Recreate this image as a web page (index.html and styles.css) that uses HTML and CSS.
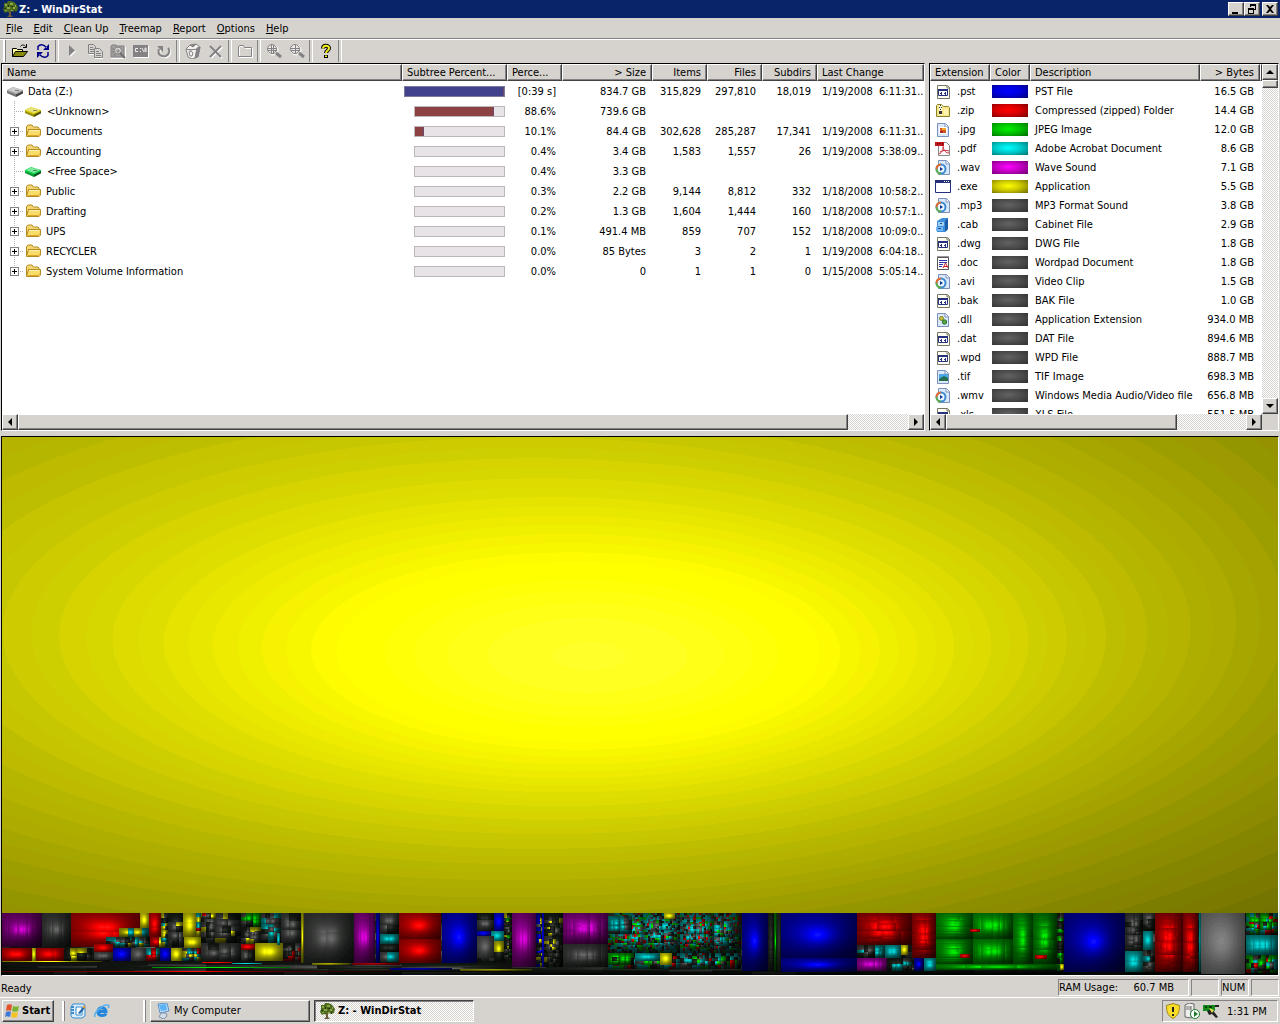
FILE: index.html
```html
<!DOCTYPE html>
<html lang="en">
<head>
<meta charset="utf-8">
<title>Z: - WinDirStat</title>
<link rel="stylesheet" href="styles.css">
</head>
<body>
<svg class="defs" aria-hidden="true">
  <symbol id="tree" viewBox="0 0 16 16"><path d="M2 2h3l1-2h3l3 1 2 2 2 3-1 4-3 1-2-1-2 2-3-1-2 1-2-3 1-3z" fill="#4d6b1e"/><path d="M3 3h2v2H3zM8 2h3v2H8zM5 6h3v2H5zM11 6h2v2h-2zM3 9h2v1H3zM9 9h2v1H9zM13 4h1v2h-1z" fill="#8fa648"/><path d="M6 4h1v2H6zM9 5h2v1H9zM2 7h2v1H2zM12 9h1v2h-1z" fill="#22380c"/><path d="M7 10h2v4l2 2H5l2-2z" fill="#6d5a3a"/></symbol>
  <symbol id="folder" viewBox="0 0 16 16"><path d="M1.500 13V3.500L3 2h4l1.500 2H13l1 1v2" fill="#f4d671" stroke="#b38b22"/><path d="M1.500 13.500 3.500 6.500h12V12L14 13.500z" fill="#f9dc6a" stroke="#b38b22"/><path d="M4 7.500h10" stroke="#fff2b4"/><path d="M3 12.500h10l2-2" stroke="#dba92a" fill="none"/></symbol>
  <symbol id="drive" viewBox="0 0 16 16"><path d="M0 7 6 4l10 3v3l-7 4-9-4z" fill="currentColor"/><path d="M1 7 6 4.500 15 7 9 10z" fill="#fff" opacity=".45"/><path d="M0 8l9 3.500V14L0 10z" fill="#000" opacity=".3"/><path d="M9 11.500 16 8v2.500L9 14z" fill="#000" opacity=".6"/><path d="M8 7h4v1H8z" fill="#000" opacity=".4"/></symbol>
  <symbol id="file" viewBox="0 0 16 16"><path d="M2.500 1.500h10l2 2v11h-12z" fill="#fffef2" stroke="#777763"/><path d="M12 1.500V4h3" fill="none" stroke="#777763"/><path d="M3.500 5.500h9v6h-9z" fill="#fff" stroke="#26327d"/><path d="M3 5h10v2H3z" fill="#26327d"/><path d="M5 9h1v1H5zM6 8h1v3H6zM10 8h1v3h-1zM9 9h1v1H9z" fill="#26327d"/></symbol>
  <symbol id="zip" viewBox="0 0 16 16"><path d="M1.500 13.500v-11l1-1h4l2 2h5l1 1v9z" fill="#f7e788" stroke="#8b8129"/><path d="M4 2h3v10H4z" fill="#f4f4e2"/><path d="M5 2h1v1H5zM4 4h1v1H4zM6 4h1v1H6zM5 6h1v1H5zM4 8h3v3H4z" fill="#333"/><path d="M9 6h4v6H9z" fill="#fff3ae"/></symbol>
  <symbol id="jpg" viewBox="0 0 16 16"><path d="M2.500 1.500h8l3 3v10h-11z" fill="#dce9fb" stroke="#7b91bd"/><path d="M10 1.500V5h3.500" fill="#fff" stroke="#7b91bd"/><path d="M4 5h8v7H4z" fill="#fff"/><path d="M5 6h6v5H5z" fill="#d6581d"/><path d="M7 6h4v2H7z" fill="#f4ac2f"/><path d="M5 9h3v2H5z" fill="#a52b35"/></symbol>
  <symbol id="tif" viewBox="0 0 16 16"><path d="M2.500 1.500h8l3 3v10h-11z" fill="#dce9fb" stroke="#7b91bd"/><path d="M10 1.500V5h3.500" fill="#fff" stroke="#7b91bd"/><path d="M4 5h9v7H4z" fill="#4aa6e5"/><path d="M4 10l5-3 4 2v3H4z" fill="#246e4f"/></symbol>
  <symbol id="pdf" viewBox="0 0 16 16"><path d="M3.500 1.500h8l3 3v10h-11z" fill="#fff" stroke="#888"/><path d="M0 1h9v4H0z" fill="#c5171d"/><path d="M2 2h1v2H2zM4 2h2v1H4zM7 2h1v2H7z" fill="#7b070a"/><path d="M4 13c3-1 5-6 4-8M8 6c1 4 3 6 6 6M5 11c3-2 6-2 9-1" fill="none" stroke="#cf2b36"/></symbol>
  <symbol id="media" viewBox="0 0 16 16"><path d="M3.500.500h8l3 3v11h-11z" fill="#dce9fb" stroke="#7b91bd"/><path d="M11 .500V4h3.500" fill="#fff" stroke="#7b91bd"/><circle cx="6" cy="9" r="4.500" fill="#eaf5ff" stroke="#3b8bd2" stroke-width="2"/><path d="M1.500 9A4.500 4.500 0 0 1 6 4.500" fill="none" stroke="#e36a2b" stroke-width="2"/><path d="M6 13.500A4.500 4.500 0 0 1 1.500 9" fill="none" stroke="#5fae48" stroke-width="2"/><path d="M5 7l3 2-3 2z" fill="#12358c"/></symbol>
  <symbol id="exe" viewBox="0 0 16 16"><path d="M.500 1.500h15v12H.500z" fill="#fff" stroke="#23307a"/><path d="M0 1h16v3H0z" fill="#23307a"/><path d="M9 2h1v1H9zM11 2h1v1h-1zM13 2h1v1h-1z" fill="#fff"/></symbol>
  <symbol id="cab" viewBox="0 0 16 16"><path d="M2 4l5-3h6v11l-3 3H2z" fill="#3e8fdc"/><path d="M10 4l3-3v11l-3 3z" fill="#1c5ba6"/><path d="M3 5h6v4H3z" fill="#9bcdf5"/><path d="M5 6h2v1H5z" fill="#174a8c"/><path d="M1 10h7v4H1z" fill="#74b7f0"/><path d="M3 11h3v1H3z" fill="#174a8c"/></symbol>
  <symbol id="doc" viewBox="0 0 16 16"><path d="M2.500 2.500h11v12h-11z" fill="#fff" stroke="#555"/><path d="M3 1v2M5 1v2M7 1v2M9 1v2M11 1v2M13 1v2" stroke="#333" stroke-dasharray="1"/><path d="M4 5.500h8M4 7.500h8M4 9.500h4M4 11.500h3" stroke="#2733a8"/><path d="M8 13l2.500-5L13 13M9 11.500h3" fill="none" stroke="#d01f1f"/></symbol>
  <symbol id="dll" viewBox="0 0 16 16"><path d="M2.500 1.500h8l3 3v10h-11z" fill="#dce9fb" stroke="#7b91bd"/><path d="M10 1.500V5h3.500" fill="#fff" stroke="#7b91bd"/><circle cx="6.500" cy="6.500" r="2" fill="#cfc23b" stroke="#778421"/><circle cx="9.500" cy="10" r="2.200" fill="#54a947" stroke="#2b6f2b"/></symbol>
  <symbol id="open" viewBox="0 0 16 16"><path d="M.500 13.500v-8h4l1 1h5v3" fill="#ffffa0" stroke="#000"/><path d="M.500 13.500l3-5h12l-4 5z" fill="#8a8a10" stroke="#000"/><path d="M8.500 3.500c1-2 4-2 5 0M14.500 1v3.500H11" fill="none" stroke="#000"/></symbol>
  <symbol id="refresh" viewBox="0 0 16 16"><path d="M3 7V3.500C5 1 8 1 11 4M13 9v3.500C11 15 8 15 5 12" fill="none" stroke="#00008b" stroke-width="1.500"/><path d="M14 1v6H8zM2 15V9h6z" fill="#00008b"/><path d="M12 4v1h-1zM4 12v-1h1z" fill="#d6d3ce"/></symbol>
  <symbol id="play" viewBox="0 0 16 16"><path d="M6 3l6 5.500L6 14z" fill="#fff"/><path d="M5 2l6 5.500L5 13z" fill="#848284"/></symbol>
  <symbol id="copy" viewBox="0 0 16 16"><path d="M1.500 1.500h5l2 2v7h-7z" fill="none" stroke="#848284"/><path d="M3 4.500h3M3 6.500h4M3 8.500h4" stroke="#848284"/><path d="M7.500 5.500h5l3 3v6h-8z" fill="#d6d3ce" stroke="#848284"/><path d="M9 8.500h3M9 10.500h5M9 12.500h5" stroke="#848284"/><path d="M8 15.500h8M2 11.500h5" stroke="#fff"/></symbol>
  <symbol id="explore" viewBox="0 0 16 16"><path d="M1 3l1-1h4l1 1h7v11H1z" fill="#a09e9e" stroke="#848284"/><path d="M1 15.500h14.500V4" fill="none" stroke="#fff"/><circle cx="8" cy="7.500" r="3.500" fill="#d6d3ce" stroke="#848284"/><path d="M6 8h4M8 6v4M2 6h2M2 9h2M3 12h3" stroke="#848284"/><path d="M10 10l5 5" stroke="#6f6d6f" stroke-width="2"/></symbol>
  <symbol id="cmd" viewBox="0 0 16 16"><path d="M1 3h15v12H1z" fill="#fff"/><path d="M0 2h15v12H0z" fill="#848284"/><path d="M5 5.500H2.500v3H5M7.500 5v1M7.500 8v1M9 5l2 4M12 9V5h1v4" fill="none" stroke="#f0eeea"/></symbol>
  <symbol id="redo" viewBox="0 0 16 16"><path d="M3 6c-2 6 3 8 7 7 4-2 4-6 2-8" fill="none" stroke="#fff" stroke-width="2" transform="translate(1 1)"/><path d="M3 6c-2 6 3 8 7 7 4-2 4-6 2-8" fill="none" stroke="#848284" stroke-width="2"/><path d="M1 3h6v6L5 7z" fill="#848284"/></symbol>
  <symbol id="bin" viewBox="0 0 16 16"><path d="M1 6l4-4 6-1 4 3-2 10-6 2-4-2z" fill="#f3f1ed" stroke="#848284"/><path d="M1 6l4 1 8-1M12 5l3-1-2 9-3 2zM5 2l3 2 3-3" fill="#848284" stroke="#848284"/><path d="M4 9l2-1 2 2-1 3H5z" fill="none" stroke="#848284"/></symbol>
  <symbol id="del" viewBox="0 0 16 16"><path d="M3 4l11 11M14 4L3 15" stroke="#fff" stroke-width="2"/><path d="M2 3l11 11M13 3L2 14" stroke="#848284" stroke-width="2"/></symbol>
  <symbol id="newfolder" viewBox="0 0 16 16"><path d="M2.500 14.500v-10l1-1h4l1 2h7v9z" fill="none" stroke="#fff"/><path d="M1.500 13.500v-10l1-1h4l1 2h7v9z" fill="none" stroke="#848284"/></symbol>
  <symbol id="zoomin" viewBox="0 0 16 16"><circle cx="7" cy="7" r="5" fill="none" stroke="#fff"/><circle cx="6" cy="6" r="4.500" fill="#eceae6" stroke="#848284"/><path d="M2 5.500h9M2 7.500h9M5.500 2v9M7.500 2v9" stroke="#848284"/><path d="M10 10l5 4" stroke="#848284" stroke-width="3"/></symbol>
  <symbol id="zoomout" viewBox="0 0 16 16"><circle cx="7" cy="7" r="5" fill="none" stroke="#fff"/><circle cx="6" cy="6" r="4.500" fill="#eceae6" stroke="#848284"/><path d="M2 5.500h9M2 7.500h9M6.500 2v9" stroke="#848284"/><path d="M10 10l5 4" stroke="#848284" stroke-width="3"/></symbol>
  <symbol id="help" viewBox="0 0 16 16"><path d="M5 5.500C5 2 11 2 11 5S8 7.500 8 10M8 12v3" fill="none" stroke="#000" stroke-width="4"/><path d="M5 5.500C5 2 11 2 11 5S8 7.500 8 10M8 12.500V14" fill="none" stroke="#f3ee20" stroke-width="2"/></symbol>
  <symbol id="flag" viewBox="0 0 16 16"><path d="M3 2c2-1 4-1 5 0L7 8C5 7 4 7 2 8z" fill="#e2532a"/><path d="M9 3c2 1 4 1 6 0l-1 5c-2 1-4 1-6 0z" fill="#7cb32d"/><path d="M2 9c2-1 3-1 5 0l-1 5c-2-1-4-1-5 0z" fill="#3f79d6"/><path d="M8 9c2 1 4 1 6 0l-1 5c-2 1-4 1-6 0z" fill="#f4c222"/></symbol>
  <symbol id="desktop" viewBox="0 0 16 16"><path d="M3 1h11l1 2v10l-3 2H3l-2-2V4z" fill="#d8ecfb" stroke="#3b8cc8"/><path d="M1 4h3M1 7h3M1 10h3" stroke="#3b8cc8" stroke-width="2"/><path d="M6 4h6v8H6z" fill="#fff" stroke="#3b8cc8"/><path d="M8 10l5-6 2 1-5 6z" fill="#2468ab"/><path d="M13 3l2 2" stroke="#e29e35" stroke-width="2"/></symbol>
  <symbol id="ie" viewBox="0 0 16 16"><path d="M12 10.500C11 13 4 14 4 8.500S12 4 12 8.500H5" fill="none" stroke="#2486dc" stroke-width="3"/><path d="M1 14c-2-4 8-13 13-12 2 1 0 3 0 3" fill="none" stroke="#5bb0ee" stroke-width="1.500"/></symbol>
  <symbol id="computer" viewBox="0 0 16 16"><path d="M3 1l9-1 2 8-9 2z" fill="#bfe2fb" stroke="#5c8fc4"/><path d="M4 2l7-1 1 6-6 1z" fill="#5cb2f3"/><path d="M6 10h5l1 3-3 3-5-2z" fill="#d3dbe6" stroke="#7e93ab"/></symbol>
  <symbol id="shield" viewBox="0 0 16 16"><path d="M8 .500l6.500 2c0 6-1 10-6.500 13C2.500 12.500 1.500 8.500 1.500 2.500z" fill="#f9dc27" stroke="#a08718"/><path d="M8 4v5M8 11v2" stroke="#222" stroke-width="2"/></symbol>
  <symbol id="server" viewBox="0 0 16 16"><path d="M1 2l4-2 5 1v12l-3 2-6-1z" fill="#eee" stroke="#666"/><path d="M2 4h5M2 6h5M7 3v11" stroke="#777"/><circle cx="11" cy="11" r="4.500" fill="#fff" stroke="#1e7a2c"/><path d="M10 8l4 3-4 3z" fill="#1e7a2c"/></symbol>
  <symbol id="nic" viewBox="0 0 16 16"><path d="M0 2h12v6H0z" fill="#168a1b"/><path d="M2 3h2v2H2zM6 3h3v2H6z" fill="#063c08"/><path d="M12 2h4v2h-4zM4 8l5-2 6 8-2 1-4-4-3 1z" fill="#222"/><path d="M6 5l5 2-2 3z" fill="#e4e34a"/></symbol>
</svg>

<header class="titlebar">
  <svg class="icon"><use href="#tree"/></svg>
  <h1>Z: - WinDirStat</h1>
  <button class="caption" aria-label="Minimize"><svg viewBox="0 0 12 10"><path d="M2 8h6v2H2z"/></svg></button>
  <button class="caption" aria-label="Restore"><svg viewBox="0 0 12 10"><path d="M4 0h6v6H8V5h1V2H5v1H4zM2 4h6v6H2zM3 6v3h4V6z" fill-rule="evenodd"/></svg></button>
  <button class="caption close" aria-label="Close"><svg viewBox="0 0 12 10"><path d="M2 1h2l2 2 2-2h2L7 5l3 4H8L6 7 4 9H2l3-4z"/></svg></button>
</header>

<nav class="menubar">
  <button><u>F</u>ile</button><button><u>E</u>dit</button><button><u>C</u>lean Up</button><button><u>T</u>reemap</button><button><u>R</u>eport</button><button><u>O</u>ptions</button><button><u>H</u>elp</button>
</nav>

<div class="toolbar" role="toolbar">
  <button aria-label="Open"><svg class="icon"><use href="#open"/></svg></button>
  <button aria-label="Refresh all"><svg class="icon"><use href="#refresh"/></svg></button>
  <i class="sep"></i>
  <button aria-label="Resume"><svg class="icon"><use href="#play"/></svg></button>
  <button aria-label="Copy path"><svg class="icon"><use href="#copy"/></svg></button>
  <button aria-label="Explorer here"><svg class="icon"><use href="#explore"/></svg></button>
  <button aria-label="Command prompt here"><svg class="icon"><use href="#cmd"/></svg></button>
  <button aria-label="Refresh selected"><svg class="icon"><use href="#redo"/></svg></button>
  <i class="sep"></i>
  <button aria-label="Delete to recycle bin"><svg class="icon"><use href="#bin"/></svg></button>
  <button aria-label="Delete"><svg class="icon"><use href="#del"/></svg></button>
  <i class="sep"></i>
  <button aria-label="Select parent"><svg class="icon"><use href="#newfolder"/></svg></button>
  <i class="sep"></i>
  <button aria-label="Zoom in"><svg class="icon"><use href="#zoomin"/></svg></button>
  <button aria-label="Zoom out"><svg class="icon"><use href="#zoomout"/></svg></button>
  <i class="sep"></i>
  <button aria-label="Help"><svg class="icon"><use href="#help"/></svg></button>
  <i class="sep"></i>
</div>

<main>
<div class="panes">
  <section class="pane dirs">
    <div class="list">
      <table>
        <colgroup><col class="c-name"><col class="c-bar"><col class="c-pct"><col class="c-size"><col class="c-num"><col class="c-num"><col class="c-num"><col></colgroup>
        <thead><tr><th>Name</th><th>Subtree Percent...</th><th>Perce...</th><th class="r">&gt; Size</th><th class="r">Items</th><th class="r">Files</th><th class="r">Subdirs</th><th>Last Change</th></tr></thead>
        <tbody>
          <tr><td><div class="node root"><svg class="icon grey"><use href="#drive"/></svg><span>Data (Z:)</span></div></td><td><div class="bar top"><div style="width:100%"></div></div></td><td>[0:39 s]</td><td>834.7 GB</td><td>315,829</td><td>297,810</td><td>18,019</td><td>1/19/2008&nbsp; 6:11:31..</td></tr>
          <tr><td><div class="node"><span class="branch"></span><svg class="icon yellow"><use href="#drive"/></svg><span>&lt;Unknown&gt;</span></div></td><td><div class="bar"><div style="width:88.6%"></div></div></td><td>88.6%</td><td>739.6 GB</td><td></td><td></td><td></td><td></td></tr>
          <tr><td><div class="node"><span class="branch"><button aria-label="Expand Documents"></button></span><svg class="icon"><use href="#folder"/></svg><span>Documents</span></div></td><td><div class="bar"><div style="width:10.1%"></div></div></td><td>10.1%</td><td>84.4 GB</td><td>302,628</td><td>285,287</td><td>17,341</td><td>1/19/2008&nbsp; 6:11:31..</td></tr>
          <tr><td><div class="node"><span class="branch"><button aria-label="Expand Accounting"></button></span><svg class="icon"><use href="#folder"/></svg><span>Accounting</span></div></td><td><div class="bar"></div></td><td>0.4%</td><td>3.4 GB</td><td>1,583</td><td>1,557</td><td>26</td><td>1/19/2008&nbsp; 5:38:09..</td></tr>
          <tr><td><div class="node"><span class="branch"></span><svg class="icon green"><use href="#drive"/></svg><span>&lt;Free Space&gt;</span></div></td><td><div class="bar"></div></td><td>0.4%</td><td>3.3 GB</td><td></td><td></td><td></td><td></td></tr>
          <tr><td><div class="node"><span class="branch"><button aria-label="Expand Public"></button></span><svg class="icon"><use href="#folder"/></svg><span>Public</span></div></td><td><div class="bar"></div></td><td>0.3%</td><td>2.2 GB</td><td>9,144</td><td>8,812</td><td>332</td><td>1/18/2008&nbsp; 10:58:2..</td></tr>
          <tr><td><div class="node"><span class="branch"><button aria-label="Expand Drafting"></button></span><svg class="icon"><use href="#folder"/></svg><span>Drafting</span></div></td><td><div class="bar"></div></td><td>0.2%</td><td>1.3 GB</td><td>1,604</td><td>1,444</td><td>160</td><td>1/18/2008&nbsp; 10:57:1..</td></tr>
          <tr><td><div class="node"><span class="branch"><button aria-label="Expand UPS"></button></span><svg class="icon"><use href="#folder"/></svg><span>UPS</span></div></td><td><div class="bar"></div></td><td>0.1%</td><td>491.4 MB</td><td>859</td><td>707</td><td>152</td><td>1/18/2008&nbsp; 10:09:0..</td></tr>
          <tr><td><div class="node"><span class="branch"><button aria-label="Expand RECYCLER"></button></span><svg class="icon"><use href="#folder"/></svg><span>RECYCLER</span></div></td><td><div class="bar"></div></td><td>0.0%</td><td>85 Bytes</td><td>3</td><td>2</td><td>1</td><td>1/19/2008&nbsp; 6:04:18..</td></tr>
          <tr><td><div class="node"><span class="branch last"><button aria-label="Expand System Volume Information"></button></span><svg class="icon"><use href="#folder"/></svg><span>System Volume Information</span></div></td><td><div class="bar"></div></td><td>0.0%</td><td>0</td><td>1</td><td>1</td><td>0</td><td>1/15/2008&nbsp; 5:05:14..</td></tr>
        </tbody>
      </table>
    </div>
    <div class="scroll"><button class="arrow left" aria-label="Scroll left"></button><div class="track"><div class="thumb" style="width:93.3%"></div></div><button class="arrow right" aria-label="Scroll right"></button></div>
  </section>

  <section class="pane types">
    <div class="body">
      <div class="list">
        <table>
          <colgroup><col class="c-ext"><col class="c-color"><col class="c-desc"><col class="c-bytes"><col></colgroup>
          <thead><tr><th>Extension</th><th>Color</th><th>Description</th><th class="r">&gt; Bytes</th><th></th></tr></thead>
          <tbody>
            <tr><td><div class="ext"><svg class="icon"><use href="#file"/></svg>.pst</div></td><td><div class="chip blue"></div></td><td>PST File</td><td>16.5 GB</td></tr>
            <tr><td><div class="ext"><svg class="icon"><use href="#zip"/></svg>.zip</div></td><td><div class="chip red"></div></td><td>Compressed (zipped) Folder</td><td>14.4 GB</td></tr>
            <tr><td><div class="ext"><svg class="icon"><use href="#jpg"/></svg>.jpg</div></td><td><div class="chip lime"></div></td><td>JPEG Image</td><td>12.0 GB</td></tr>
            <tr><td><div class="ext"><svg class="icon"><use href="#pdf"/></svg>.pdf</div></td><td><div class="chip cyan"></div></td><td>Adobe Acrobat Document</td><td>8.6 GB</td></tr>
            <tr><td><div class="ext"><svg class="icon"><use href="#media"/></svg>.wav</div></td><td><div class="chip magenta"></div></td><td>Wave Sound</td><td>7.1 GB</td></tr>
            <tr><td><div class="ext"><svg class="icon"><use href="#exe"/></svg>.exe</div></td><td><div class="chip gold"></div></td><td>Application</td><td>5.5 GB</td></tr>
            <tr><td><div class="ext"><svg class="icon"><use href="#media"/></svg>.mp3</div></td><td><div class="chip"></div></td><td>MP3 Format Sound</td><td>3.8 GB</td></tr>
            <tr><td><div class="ext"><svg class="icon"><use href="#cab"/></svg>.cab</div></td><td><div class="chip"></div></td><td>Cabinet File</td><td>2.9 GB</td></tr>
            <tr><td><div class="ext"><svg class="icon"><use href="#file"/></svg>.dwg</div></td><td><div class="chip"></div></td><td>DWG File</td><td>1.8 GB</td></tr>
            <tr><td><div class="ext"><svg class="icon"><use href="#doc"/></svg>.doc</div></td><td><div class="chip"></div></td><td>Wordpad Document</td><td>1.8 GB</td></tr>
            <tr><td><div class="ext"><svg class="icon"><use href="#media"/></svg>.avi</div></td><td><div class="chip"></div></td><td>Video Clip</td><td>1.5 GB</td></tr>
            <tr><td><div class="ext"><svg class="icon"><use href="#file"/></svg>.bak</div></td><td><div class="chip"></div></td><td>BAK File</td><td>1.0 GB</td></tr>
            <tr><td><div class="ext"><svg class="icon"><use href="#dll"/></svg>.dll</div></td><td><div class="chip"></div></td><td>Application Extension</td><td>934.0 MB</td></tr>
            <tr><td><div class="ext"><svg class="icon"><use href="#file"/></svg>.dat</div></td><td><div class="chip"></div></td><td>DAT File</td><td>894.6 MB</td></tr>
            <tr><td><div class="ext"><svg class="icon"><use href="#file"/></svg>.wpd</div></td><td><div class="chip"></div></td><td>WPD File</td><td>888.7 MB</td></tr>
            <tr><td><div class="ext"><svg class="icon"><use href="#tif"/></svg>.tif</div></td><td><div class="chip"></div></td><td>TIF Image</td><td>698.3 MB</td></tr>
            <tr><td><div class="ext"><svg class="icon"><use href="#media"/></svg>.wmv</div></td><td><div class="chip"></div></td><td>Windows Media Audio/Video file</td><td>656.8 MB</td></tr>
            <tr><td><div class="ext"><svg class="icon"><use href="#file"/></svg>.xls</div></td><td><div class="chip"></div></td><td>XLS File</td><td>551.5 MB</td></tr>
          </tbody>
        </table>
      </div>
      <div class="scroll vertical"><button class="arrow up" aria-label="Scroll up"></button><div class="track"><div class="thumb"></div></div><button class="arrow down" aria-label="Scroll down"></button></div>
    </div>
    <div class="foot">
      <div class="scroll"><button class="arrow left" aria-label="Scroll left"></button><div class="track"><div class="thumb" style="width:77%"></div></div><button class="arrow right" aria-label="Scroll right"></button></div>
    </div>
  </section>
</div>
<div class="treemap"><canvas id="map" aria-label="Treemap of drive Z:"></canvas></div>
</main>

<footer class="status">
  <span class="ready">Ready</span>
  <span class="cell ram"><span>RAM Usage:</span><span>60.7 MB</span></span>
  <span class="cell"></span>
  <span class="cell">NUM</span>
  <span class="cell"></span>
</footer>

<div class="taskbar">
  <button class="start"><svg class="icon"><use href="#flag"/></svg>Start</button>
  <div class="quick"><button aria-label="Show desktop"><svg class="icon"><use href="#desktop"/></svg></button><button aria-label="Internet Explorer"><svg class="icon"><use href="#ie"/></svg></button></div>
  <div class="tasks">
    <button class="task"><svg class="icon"><use href="#computer"/></svg>My Computer</button>
    <button class="task active"><svg class="icon"><use href="#tree"/></svg>Z: - WinDirStat</button>
  </div>
  <div class="tray"><svg class="icon"><use href="#shield"/></svg><svg class="icon"><use href="#server"/></svg><svg class="icon"><use href="#nic"/></svg><time>1:31 PM</time></div>
</div>
<script src="treemap.js"></script>
</body>
</html>
```

FILE: styles.css
```css
:root {
  --face: #d6d3ce;
  --shadow: #848284;
  --dark: #424142;
}
* { box-sizing: border-box; }
body {
  margin: 0;
  height: 100vh;
  display: flex;
  flex-direction: column;
  overflow: hidden;
  background: var(--face);
  color: #000;
  font: 11px/14px "DejaVu Sans Condensed", "DejaVu Sans", sans-serif;
}
button {
  font: inherit;
  color: inherit;
  background: none;
  border: 0;
  padding: 0;
  margin: 0;
}
.defs { position: absolute; width: 0; height: 0; }
.icon { width: 16px; height: 16px; flex: none; display: block; }

.titlebar {
  flex: none;
  height: 18px;
  display: flex;
  align-items: center;
  padding: 0 2px;
  background: #0a246a;
  color: #fff;
}
.titlebar h1 { margin: 0; flex: 1; padding: 1px 0 0 1px; font-size: 11px; line-height: 14px; }
.caption {
  width: 16px;
  height: 14px;
  background: var(--face);
  border: 1px solid;
  border-color: #fff var(--dark) var(--dark) #fff;
  box-shadow: inset -1px -1px var(--shadow);
  padding: 1px;
}
.caption svg { display: block; width: 12px; height: 10px; }
.caption.close { margin-left: 2px; }

.menubar { flex: none; height: 21px; display: flex; align-items: center; border-bottom: 1px solid var(--shadow); }
.menubar button { padding: 1px 5px 0 6px; }

.toolbar {
  flex: none;
  height: 24px;
  display: flex;
  align-items: flex-start;
  padding-left: 3px;
  border-top: 1px solid #fff;
}
.toolbar::before { content: ""; width: 3px; height: 22px; border-left: 2px solid #fff; box-shadow: inset 1px 0 var(--shadow); }
.toolbar button { width: 23px; height: 22px; display: grid; place-items: center; }
.sep { width: 6px; height: 22px; display: flex; justify-content: center; }
.sep::before { content: ""; width: 2px; border-left: 1px solid var(--shadow); border-right: 1px solid #fff; }

main { flex: 1; min-height: 0; display: flex; flex-direction: column; gap: 5px; }
.panes { flex: none; height: 368px; display: flex; gap: 4px; padding: 0 1px; }
.pane {
  display: flex;
  flex-direction: column;
  min-width: 0;
  background: #fff;
  border: 1px solid #000;
  border-right-color: #fff;
  border-bottom-color: #fff;
}
.dirs { flex: 1; }
.types { flex: 0 0 350px; }
.body { flex: 1; min-height: 0; display: flex; }
.list { flex: 1; min-width: 0; min-height: 0; overflow: hidden; }
table { width: 100%; table-layout: fixed; border-collapse: separate; border-spacing: 0; }
.dirs tbody tr { height: 20px; }
.types tbody tr { height: 19px; }
th {
  height: 17px;
  padding: 1px 5px 0 4px;
  text-align: left;
  font-weight: normal;
  white-space: nowrap;
  background: var(--face);
  border: 1px solid;
  border-color: #fff var(--dark) var(--dark) #fff;
  box-shadow: inset -1px -1px var(--shadow);
}
th.r { text-align: right; }
td { padding: 1px 6px 0 5px; white-space: nowrap; overflow: hidden; }
.types td { padding-top: 2px; }
.c-name { width: 400px; }
.c-bar { width: 105px; }
.c-pct { width: 55px; }
.c-size { width: 90px; }
.c-num { width: 55px; }
.dirs td:first-child { padding: 0; }
.dirs td:nth-child(2) { padding: 0 2px; }
.dirs td:nth-child(n+3):nth-child(-n+7) { text-align: right; }
.dirs td:last-child { padding-right: 0; }
.node { display: flex; align-items: center; gap: 5px; height: 20px; }
.node > span:last-child { padding-top: 2px; }
.node.root { padding-left: 5px; }
.branch {
  width: 23px;
  height: 20px;
  margin-right: -5px;
  padding-left: 8px;
  display: flex;
  align-items: center;
  background:
    repeating-linear-gradient(#b5b2b5 0 1px, transparent 1px 2px) 12px 0 / 1px 100% no-repeat,
    repeating-linear-gradient(90deg, #b5b2b5 0 1px, transparent 1px 2px) 12px 10px / 10px 1px no-repeat;
}
.branch.last { background-size: 1px 10px, 10px 1px; }
.branch button {
  width: 9px;
  height: 9px;
  border: 1px solid var(--shadow);
  background:
    linear-gradient(#000, #000) 1px 3px / 5px 1px no-repeat,
    linear-gradient(#000, #000) 3px 1px / 1px 5px no-repeat,
    #fff;
}
.grey { color: #a5a5a5; }
.yellow { color: #d8cc10; margin-right: 1px; }
.green { color: #12d84e; margin-right: 1px; }
.bar { width: 91px; height: 11px; margin-left: auto; border: 1px solid #bdb6bd; background: #e7e3e7; }
.bar div { height: 100%; background: #8c4142; border-right: 1px solid #6b4a6b; }
.bar.top { width: 101px; border-color: #7a7a9a; }
.bar.top div { background: #42418c; }

.c-ext { width: 60px; }
.c-color { width: 40px; }
.c-desc { width: 170px; }
.c-bytes { width: 60px; }
.types td:nth-child(4) { text-align: right; }
.types td:first-child { padding-right: 0; }
.types td:nth-child(2) { padding: 1px 2px 0; }
.ext { display: flex; align-items: center; gap: 6px; }
.chip { height: 13px; background: radial-gradient(ellipse at 45% 45%, #636363, #4a4a4a 50%, #333 95%); }
.chip.blue { background: radial-gradient(ellipse at 45% 45%, #00f, #0000dc 45%, #00007b 95%); }
.chip.red { background: radial-gradient(ellipse at 45% 45%, #f00, #d80000 45%, #7b0000 95%); }
.chip.lime { background: radial-gradient(ellipse at 45% 45%, #00f000, #00c000 45%, #007300 95%); }
.chip.cyan { background: radial-gradient(ellipse at 45% 45%, #0ff, #00cccc 45%, #007b7b 95%); }
.chip.magenta { background: radial-gradient(ellipse at 45% 45%, #f0f, #c400c4 45%, #730073 95%); }
.chip.gold { background: radial-gradient(ellipse at 45% 45%, #ff0, #ccc800 45%, #737300 95%); }

.scroll { flex: none; display: flex; height: 16px; }
.track { flex: 1; display: flex; background: repeating-conic-gradient(#fff 0 25%, var(--face) 0 50%) 0 0 / 2px 2px; }
.arrow, .thumb {
  background: var(--face);
  border: 1px solid;
  border-color: #fff var(--dark) var(--dark) #fff;
  box-shadow: inset -1px -1px var(--shadow);
}
.arrow { flex: none; width: 16px; height: 16px; display: grid; place-items: center; }
.arrow::before { content: ""; border: 4px solid transparent; }
.arrow.left::before { border-right-color: #000; border-left: 0; }
.arrow.right::before { border-left-color: #000; border-right: 0; }
.arrow.up::before { border-bottom-color: #000; border-top: 0; }
.arrow.down::before { border-top-color: #000; border-bottom: 0; }
.vertical { flex-direction: column; width: 16px; height: auto; }
.vertical .thumb { width: 16px; height: 8px; }
.foot { flex: none; display: flex; background: var(--face); padding-right: 16px; }
.foot .scroll { flex: 1; }

.treemap { flex: 1; min-height: 0; margin: 0 1px; border: 1px solid #000; border-right-color: #fff; border-bottom-color: #fff; }
.treemap canvas { display: block; width: 100%; height: 100%; }

.status { flex: none; height: 22px; display: flex; align-items: center; gap: 2px; padding: 3px 1px 1px; border-bottom: 1px solid #fff; }
.ready { flex: 1; padding-top: 2px; }
.cell {
  min-width: 28px;
  height: 17px;
  padding: 1px 0 0;
  border: 1px solid;
  border-color: var(--shadow) #fff #fff var(--shadow);
}
.ram { width: 131px; display: flex; justify-content: space-between; padding-right: 14px; }

.taskbar { flex: none; height: 26px; display: flex; align-items: center; padding: 0 2px; }
.start, .task {
  height: 22px;
  display: flex;
  align-items: center;
  border: 1px solid;
  border-color: #fff var(--dark) var(--dark) #fff;
  box-shadow: inset -1px -1px var(--shadow);
}
.start { gap: 2px; width: 52px; padding-left: 1px; font-weight: bold; }
.quick { display: flex; gap: 8px; width: 81px; height: 20px; margin-left: 8px; padding-left: 6px; align-items: center; border-left: 2px solid #fff; box-shadow: inset 1px 0 var(--shadow); }
.tasks { flex: 1; display: flex; gap: 4px; padding-left: 5px; border-left: 2px solid #fff; box-shadow: inset 1px 0 var(--shadow); }
.task { width: 160px; gap: 3px; padding-left: 4px; }
.task.active {
  font-weight: bold;
  border-color: var(--dark) #fff #fff var(--dark);
  box-shadow: inset 1px 1px var(--shadow);
  background: repeating-conic-gradient(#fff 0 25%, var(--face) 0 50%) 0 0 / 2px 2px;
}
.tray { width: 116px; height: 22px; display: flex; align-items: center; gap: 3px; padding-left: 2px; border: 1px solid; border-color: var(--shadow) #fff #fff var(--shadow); }
.tray time { padding: 1px 0 0 5px; }
```

FILE: treemap.js
```js
// Cushion treemap. Folder rectangles are given in map units (1276 x 538).
const UNIT_W = 1276, UNIT_H = 538;
const COLORS = {
  y: [255, 255, 0], b: [0, 0, 255], r: [255, 0, 0], g: [0, 225, 0],
  c: [0, 205, 205], m: [205, 0, 205], k: [98, 98, 98], w: [120, 120, 120], d: [45, 50, 45]
};
const AMBIENT = 0.08, GAIN = 1.08;
const LEN = Math.hypot(1, 1, 10);
const LIGHT = [-1 / LEN, -1 / LEN, 10 / LEN];

// x, y, width, height, file types, smallest cell (0 = one file), ridge height
const AREAS = [
  [0, 0, 1276, 476, "y", 0, 0.315],
  [0, 476, 1276, 62, "dddk", 6, 0.5],
  [0, 524, 1276, 14, "ddkd", [40, 2], 0.9],
  [0, 476, 40, 34, "m", [2, 40], 0.9], [40, 476, 29, 34, "k", [2, 40], 0.9],
  [69, 476, 70, 34, "r", [35, 12], 0.6], [138, 476, 9, 15, "y", 0],
  [117, 491, 30, 9, "yyyc", 6], [104, 500, 44, 10, "cccydk", 3],
  [147, 476, 12, 24, "r", 8], [148, 500, 15, 10, "yr", 7],
  [159, 476, 7, 34, "yyckd", 3], [166, 476, 17, 34, "kkkdy", 5],
  [181, 476, 14, 24, "y", 12], [194, 476, 5, 24, "cyr", 4], [182, 500, 17, 11, "y", 8],
  [0, 511, 30, 13, "r", 14], [30, 511, 4, 13, "y", 0], [34, 511, 28, 13, "r", 14],
  [62, 511, 28, 13, "yykd", 6], [92, 507, 19, 8, "r", 0], [92, 515, 19, 8, "k", 6],
  [111, 511, 18, 13, "b", 0], [129, 511, 15, 13, "k", 0], [144, 511, 14, 13, "ckrd", 4],
  [158, 511, 11, 13, "b", 0], [169, 511, 11, 13, "y", 0], [180, 511, 19, 13, "ycrk", 3],
  [199, 476, 40, 30, "kkkkkdyd", 4, 0.6], [199, 506, 40, 18, "kkkd", 7],
  [239, 476, 20, 14, "gggkd", 4], [259, 476, 20, 30, "kkkdc", 4],
  [239, 490, 20, 17, "kyykd", 4], [239, 507, 14, 6, "r", 0], [239, 513, 14, 11, "kyd", 4],
  [253, 506, 28, 18, "y", 13], [279, 476, 21, 30, "kkkd", 8], [281, 506, 19, 18, "kkdrd", 3],
  [200, 476, 14, 6, "rykd", 3], [275, 496, 3, 12, "c", 0],
  [299, 476, 3, 50, "y", 0, 0.9], [302, 476, 50, 50, "k", [20, 22], 0.8],
  [352, 476, 21, 50, "m", [3, 50], 0.7], [374, 476, 4, 50, "b", 0, 0.9],
  [378, 476, 19, 21, "kkkd", 7], [378, 497, 19, 10, "cck", 7], [378, 507, 19, 8, "bkd", 8], [378, 515, 19, 10, "cck", 9],
  [397, 476, 42, 26, "r", 0, 0.7], [397, 502, 42, 24, "r", 0, 0.7],
  [440, 476, 35, 50, "b", 0, 0.7],
  [475, 476, 17, 18, "kkd", 6], [492, 476, 10, 18, "b", 0], [475, 494, 14, 5, "b", 0],
  [489, 494, 13, 10, "c", 7], [475, 499, 17, 22, "k", 0], [492, 504, 10, 20, "cckyd", 6],
  [502, 476, 8, 50, "dddgyk", 2],
  [510, 476, 24, 54, "m", [3, 54], 0.7], [534, 476, 8, 54, "ddbkyd", 3], [542, 476, 19, 54, "ddkkkdydd", 3],
  [540, 476, 2, 54, "b", 0],
  [561, 476, 45, 31, "m", [3, 8], 0.7], [561, 507, 45, 23, "k", [3, 8], 0.8],
  [606, 476, 133, 40, "cccckkkdggkrcd", 2, 0.4], [606, 516, 133, 16, "ccckkddgrd", 3, 0.5],
  [606, 479, 24, 18, "ccck", 4], [662, 476, 11, 6, "y", 0], [606, 516, 26, 12, "gggd", 4], [633, 516, 25, 8, "c", 6], [658, 516, 12, 12, "y", 0],
  [740, 476, 26, 58, "b", 0, 0.9],
  [766, 476, 6, 58, "d", 4], [772, 476, 3, 58, "g", 0, 1.6], [775, 476, 4, 58, "d", 0],
  [779, 476, 76, 45, "b", 0, 0.8], [779, 521, 76, 14, "b", 0, 0.8],
  [855, 476, 55, 32, "r", [6, 3], 0.7], [910, 476, 24, 45, "r", [5, 3], 0.7],
  [855, 508, 28, 13, "cckd", 4], [883, 508, 16, 13, "c", 6], [899, 508, 7, 10, "y", 0],
  [855, 521, 30, 13, "m", [3, 8]], [885, 521, 25, 13, "cckd", 4],
  [912, 521, 10, 13, "b", 0, 0.9], [922, 521, 12, 13, "c", 6],
  [934, 476, 37, 26, "g", [16, 2], 0.7], [971, 476, 40, 26, "g", [4, 10], 0.7],
  [934, 502, 37, 25, "g", [16, 2], 0.7], [971, 502, 40, 25, "g", [4, 10], 0.7],
  [1011, 476, 20, 52, "g", [16, 3], 0.8], [1031, 476, 24, 52, "g", [5, 5], 0.9],
  [934, 527, 121, 6, "g", [20, 3], 0.7], [1055, 476, 7, 58, "ddkdg", 3],
  [968, 492, 10, 3, "r", 0], [958, 517, 10, 4, "r", 0], [1033, 518, 12, 4, "r", 0], [1058, 527, 4, 6, "y", 0],
  [1062, 476, 61, 59, "b", 0, 0.9],
  [1123, 476, 18, 38, "kkkd", 4], [1123, 514, 18, 21, "c", [6, 7]],
  [1141, 476, 12, 18, "kkd", 4], [1141, 494, 10, 19, "c", [3, 19]], [1141, 513, 12, 22, "kkdc", 4],
  [1153, 476, 28, 59, "r", [5, 4], 0.7], [1181, 476, 15, 59, "r", [3, 6], 0.7],
  [1197, 476, 2, 59, "c", 0, 0.9], [1199, 476, 44, 61, "w", 0, 0.35],
  [1244, 476, 32, 22, "gggckrd", 3], [1244, 498, 32, 20, "c", [3, 8]], [1244, 518, 32, 18, "gggkcrd", 3],
  [310, 526, 38, 2, "y", 0, 0.9], [350, 526, 48, 2, "r", 0, 0.9], [388, 531, 62, 2, "b", 0, 0.9],
  [458, 532, 72, 2, "y", 0, 1.2], [150, 530, 138, 1, "g", 0, 0.5], [200, 525, 30, 1, "r", 0, 0.3],
  [230, 526, 30, 1, "c", 0, 0.4], [0, 524, 100, 1, "y", 0, 0.9], [0, 534, 390, 1, "r", 0, 1.6]
];

let seed = 7;
function random() {
  seed = (seed * 1103515245 + 12345) & 0x7fffffff;
  return (seed >> 8) / 0x7fffff;
}

function ridge(s, x0, y0, x1, y1, h) {
  const wx = 4 * h / (x1 - x0), wy = 4 * h / (y1 - y0);
  return [s[0] - wx, s[1] - wy, s[2] + wx * (x0 + x1), s[3] + wy * (y0 + y1)];
}

// 16-bit color: five bits for red and blue, six for green.
function quantize(v, channel) {
  const c = Math.min(255, Math.round(v));
  return channel === 1 ? (c & 0xfc) | (c >> 6) : (c & 0xf8) | (c >> 5);
}

function shade(img, x0, y0, x1, y1, s, color) {
  for (let y = y0; y < y1; y++) {
    for (let x = x0; x < x1; x++) {
      const nx = -(2 * s[0] * (x + 0.5) + s[2]);
      const ny = -(2 * s[1] * (y + 0.5) + s[3]);
      const cos = (nx * LIGHT[0] + ny * LIGHT[1] + LIGHT[2]) / Math.sqrt(nx * nx + ny * ny + 1);
      const v = (Math.max(cos, 0) * (1 - AMBIENT) + AMBIENT) * GAIN;
      const rgb = color.map(c => c * v);
      const over = rgb.reduce((sum, c) => sum + Math.max(0, c - 255), 0);
      const i = (y * img.width + x) * 4;
      for (let k = 0; k < 3; k++) img.data[i + k] = quantize(rgb[k] > 255 ? 255 : rgb[k] + over, k);
      img.data[i + 3] = 255;
    }
  }
}

function divide(img, x0, y0, x1, y1, s, h, min, types) {
  const w = x1 - x0, t = y1 - y0;
  const splitX = w >= min[0] * 2, splitY = t >= min[1] * 2;
  if (!min[0] || (!splitX && !splitY)) {
    shade(img, x0, y0, x1, y1, s, COLORS[types[Math.floor(random() * types.length) % types.length]]);
    return;
  }
  const f = 0.35 + random() * 0.3;
  if (splitX && (!splitY || w / min[0] > t / min[1])) {
    const m = x0 + Math.round(w * f);
    divide(img, x0, y0, m, y1, ridge(s, x0, y0, m, y1, h), h * 0.8, min, types);
    divide(img, m, y0, x1, y1, ridge(s, m, y0, x1, y1, h), h * 0.8, min, types);
  } else {
    const m = y0 + Math.round(t * f);
    divide(img, x0, y0, x1, m, ridge(s, x0, y0, x1, m, h), h * 0.8, min, types);
    divide(img, x0, m, x1, y1, ridge(s, x0, m, x1, y1, h), h * 0.8, min, types);
  }
}

function draw() {
  const canvas = document.getElementById("map");
  canvas.width = canvas.clientWidth;
  canvas.height = canvas.clientHeight;
  const ctx = canvas.getContext("2d");
  const img = ctx.createImageData(canvas.width, canvas.height);
  const sx = canvas.width / UNIT_W, sy = canvas.height / UNIT_H;
  seed = 7;
  for (const [x, y, w, h, types, cell, height = 0.55] of AREAS) {
    const x0 = Math.round(x * sx), x1 = Math.min(canvas.width, Math.round((x + w) * sx));
    const y0 = Math.round(y * sy), y1 = Math.min(canvas.height, Math.round((y + h) * sy));
    const min = Array.isArray(cell) ? cell : [cell, cell];
    const start = ridge([0, 0, 0, 0], x0, y0, x1, y1, height);
    divide(img, x0, y0, x1, y1, start, types.length > 1 ? 0.22 : 0.08, min, types);
  }
  ctx.putImageData(img, 0, 0);
}

draw();
window.addEventListener("resize", draw);
```
